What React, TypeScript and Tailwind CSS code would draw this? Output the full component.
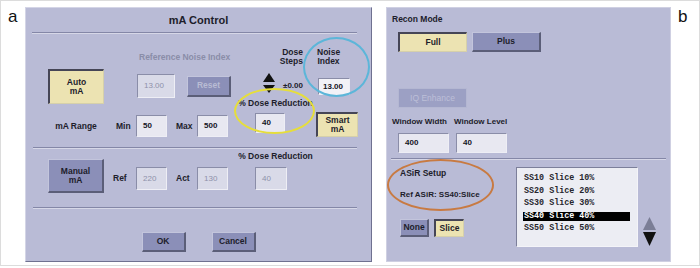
type Tone = "on" | "off" | "offDim" | "dim";
type FieldTone = "on" | "dim" | "white";

const tones: Record<Tone, string> = {
  on: "bg-[#ece3b2] border-t-2 border-l-2 border-b border-r border-t-[#454556] border-l-[#454556] border-b-[#d6d0aa] border-r-[#d6d0aa] text-[#1d1d2b]",
  off: "bg-[#8b8fb8] border-t border-l border-b-2 border-r-2 border-t-[#c3c5dc] border-l-[#c3c5dc] border-b-[#5b5e78] border-r-[#5b5e78] text-[#1d1d2b]",
  offDim: "bg-[#8b8fb8] border-t border-l border-b-2 border-r-2 border-t-[#c3c5dc] border-l-[#c3c5dc] border-b-[#5b5e78] border-r-[#5b5e78] text-[#b9bcd4]",
  dim: "bg-[#9ca0c4] border border-[#b4b7d2] text-[#bcbfd8]",
};

const fieldTones: Record<FieldTone, string> = {
  on: "bg-[#e8e8f1] text-[#15151f] font-bold",
  dim: "bg-[#d9dae8] text-[#8e91aa]",
  white: "bg-[#f2f2f7] text-[#15151f] font-bold",
};

const label = "text-[8.5px] font-bold leading-[11px] text-[#1d1d2b] whitespace-nowrap";

function Button({ tone, className, children }: { tone: Tone; className: string; children: React.ReactNode }) {
  return (
    <div
      className={`flex items-center justify-center text-center text-[8.5px] font-bold leading-[9px] ${tones[tone]} ${className}`}
    >
      {children}
    </div>
  );
}

function Field({ value, tone, className }: { value: string; tone: FieldTone; className: string }) {
  return (
    <div
      className={`flex items-center pl-[6px] text-[8px] border-t border-l border-t-[#8a8da8] border-l-[#8a8da8] border-b border-r border-b-[#eeeef5] border-r-[#eeeef5] ${fieldTones[tone]} ${className}`}
    >
      {value}
    </div>
  );
}

function Tri({ up, w, h, className }: { up?: boolean; w: number; h: number; className: string }) {
  return (
    <svg width={w} height={h} viewBox={`0 0 ${w} ${h}`} className={className}>
      <polygon
        points={up ? `${w / 2},0 ${w},${h} 0,${h}` : `0,0 ${w},0 ${w / 2},${h}`}
        fill="currentColor"
      />
    </svg>
  );
}

function Rule({ className }: { className: string }) {
  return <div className={`h-[2px] border-t border-t-[#8487a7] border-b border-b-[#d6d7e7] ${className}`} />;
}

function MaControl() {
  return (
    <div className="relative flex h-[255px] w-[347px] flex-col border-t border-l border-t-[#d4d5e6] border-l-[#d4d5e6] border-r border-b border-r-[#6f7190] border-b-[#6f7190] bg-[#b9bbd6]">
      <div className="flex h-[24px] items-center justify-center text-[11px] font-bold text-[#1d1d2b]">
        mA Control
      </div>
      <Rule className="ml-[6px] w-[325px]" />

      {/* auto mA section */}
      <div className="flex h-[113px]">
        <div className="ml-[22px] flex w-[56px] flex-col items-center">
          <Button tone="on" className="mt-[35px] h-[35px] w-[56px]">
            Auto
            <br />
            mA
          </Button>
          <div className={`${label} mt-[17px]`}>mA Range</div>
        </div>

        <div className="ml-[12px] flex w-[115px] flex-col">
          <div className={`${label} mt-[18px] pl-[23px] !text-[#8a8da8]`}>Reference Noise Index</div>
          <div className="mt-[11px] flex h-[24px] items-center">
            <Field tone="dim" value="13.00" className="ml-[21px] h-[24px] w-[38px]" />
            <Button tone="offDim" className="ml-[12px] h-[21px] w-[44px]">
              Reset
            </Button>
          </div>
          <div className="mt-[17px] flex h-[22px] items-center">
            <span className={`${label} w-[20px]`}>Min</span>
            <Field tone="on" value="50" className="h-[22px] w-[31px]" />
            <span className={`${label} ml-[9px] w-[21px]`}>Max</span>
            <Field tone="on" value="500" className="h-[22px] w-[31px]" />
          </div>
        </div>

        <div className="ml-[7px] flex w-[75px] flex-col">
          <div className={`${label} mt-[14px] pr-[10px] text-right !leading-[9px]`}>
            Dose
            <br />
            Steps
          </div>
          <div className="mt-[7px] ml-[25px] flex h-[20px]">
            <div className="flex w-[12px] flex-col gap-[3px]">
              <Tri up w={12} h={9} className="text-[#111]" />
              <Tri w={12} h={8} className="text-[#111]" />
            </div>
            <span className="ml-[8px] mt-[7px] text-[8px] font-bold leading-[11px] text-[#1d1d2b]">±0.00</span>
          </div>
          <div className={`${label} mt-[5px] text-center`}>% Dose Reduction</div>
          <Field tone="on" value="40" className="mt-[4px] ml-[17px] h-[20px] w-[30px]" />
        </div>

        <div className="ml-[3px] flex w-[42px] flex-col">
          <div className={`${label} mt-[14px] ml-[1px] w-[23px] text-center !leading-[9px]`}>
            Noise
            <br />
            Index
          </div>
          <Field tone="white" value="13.00" className="mt-[12px] ml-[2px] h-[17px] w-[32px] !pl-[4px]" />
          <Button tone="on" className="mt-[17px] h-[25px] w-[42px]">
            Smart
            <br />
            mA
          </Button>
        </div>
      </div>
      <Rule className="ml-[7px] w-[324px]" />

      {/* manual mA section */}
      <div className="flex h-[58px]">
        <Button tone="off" className="mt-[10px] ml-[22px] h-[34px] w-[56px]">
          Manual
          <br />
          mA
        </Button>
        <div className="mt-[18px] ml-[9px] flex h-[23px] items-center">
          <span className={`${label} w-[23px]`}>Ref</span>
          <Field tone="dim" value="220" className="h-[23px] w-[31px]" />
          <span className={`${label} ml-[9px] w-[21px]`}>Act</span>
          <Field tone="dim" value="130" className="h-[23px] w-[31px]" />
        </div>
        <div className="ml-[10px] flex w-[75px] flex-col">
          <div className={`${label} mt-[2px] text-center`}>% Dose Reduction</div>
          <Field tone="dim" value="40" className="mt-[5px] ml-[17px] h-[23px] w-[32px]" />
        </div>
      </div>
      <Rule className="ml-[7px] w-[324px]" />

      <div className="flex justify-center gap-[26px] pt-[23px]">
        <Button tone="off" className="h-[20px] w-[44px]">
          OK
        </Button>
        <Button tone="off" className="h-[20px] w-[44px]">
          Cancel
        </Button>
      </div>

      <div className="pointer-events-none absolute left-[277px] top-[29px] h-[60px] w-[67px] rounded-[50%] border-2 border-[#5cb6d9]" />
      <div className="pointer-events-none absolute left-[208px] top-[80px] h-[46px] w-[81px] rounded-[50%] border-2 border-[#e6de3a]" />
    </div>
  );
}

const slices = ["SS10 Slice 10%", "SS20 Slice 20%", "SS30 Slice 30%", "SS40 Slice 40%", "SS50 Slice 50%"];

function ReconPanel() {
  return (
    <div className="relative flex h-[255px] w-[285px] flex-col border border-[#cfd0e2] bg-[#b9bbd6]">
      <div className={`${label} mt-[6px] ml-[5px]`}>Recon Mode</div>
      <div className="mt-[7px] ml-[11px] flex gap-[5px]">
        <Button tone="on" className="h-[20px] w-[69px]">
          Full
        </Button>
        <Button tone="off" className="h-[20px] w-[69px]">
          Plus
        </Button>
      </div>
      <Button tone="dim" className="mt-[36px] ml-[11px] h-[20px] w-[69px] !font-normal">
        IQ Enhance
      </Button>
      <div className="mt-[8px] ml-[5px] flex">
        <span className={`${label} w-[62px] !text-[8px]`}>Window Width</span>
        <span className={`${label} !text-[8px]`}>Window Level</span>
      </div>
      <div className="mt-[6px] ml-[11px] flex gap-[7px]">
        <Field tone="on" value="400" className="h-[20px] w-[51px]" />
        <Field tone="on" value="40" className="h-[20px] w-[51px]" />
      </div>
      <Rule className="mt-[5px] ml-[4px] w-[275px]" />

      <div className="flex">
        <div className="ml-[13px] flex w-[116px] flex-col">
          <div className="mt-[8px] text-[8.5px] font-bold leading-[11px] text-[#1d1d2b]">ASiR Setup</div>
          <div className="mt-[10px] text-[8px] font-bold leading-[11px] text-[#1d1d2b]">Ref ASiR: SS40:Slice</div>
          <div className="mt-[19px] flex gap-[5px]">
            <Button tone="off" className="h-[18px] w-[29px]">
              None
            </Button>
            <Button tone="on" className="h-[18px] w-[30px]">
              Slice
            </Button>
          </div>
        </div>
        <div className="mt-[7px] flex h-[80px] w-[122px] flex-col gap-[3.6px] border-t border-l border-t-[#7c7f9a] border-l-[#7c7f9a] border-b border-r border-b-[#f4f4f8] border-r-[#f4f4f8] bg-[#ecedf3] pt-[6px] pl-[6px] font-['Liberation_Mono',monospace] text-[8.4px] font-bold">
          {slices.map((s) => (
            <div
              key={s}
              className={`h-[9px] w-[107px] whitespace-pre pl-[1px] leading-[9px] ${
                s === "SS40 Slice 40%" ? "bg-black text-white" : "text-[#26262e]"
              }`}
            >
              {s}
            </div>
          ))}
        </div>
        <div className="mt-[57px] ml-[5px] flex flex-col gap-[2px]">
          <Tri up w={13} h={13} className="text-[#7b7e96]" />
          <Tri w={13} h={14} className="text-[#111]" />
        </div>
      </div>

      <div className="pointer-events-none absolute left-[0px] top-[151px] h-[52px] w-[107px] rounded-[50%] border-2 border-[#c87a42]" />
    </div>
  );
}

export default function App() {
  return (
    <div className="h-[268px] w-[700px] bg-white font-['Liberation_Sans',Arial,sans-serif]">
      <div className="flex h-[266px] w-[700px] items-start border border-[#dcdcdc] pt-[6px]">
        <div className="mt-[1px] w-[24px] pl-[7px] text-[17px] leading-[17px] text-[#111]">a</div>
        <MaControl />
        <div className="w-[14px]" />
        <ReconPanel />
        <div className="mt-[1px] ml-[7px] text-[17px] leading-[17px] text-[#111]">b</div>
      </div>
    </div>
  );
}
